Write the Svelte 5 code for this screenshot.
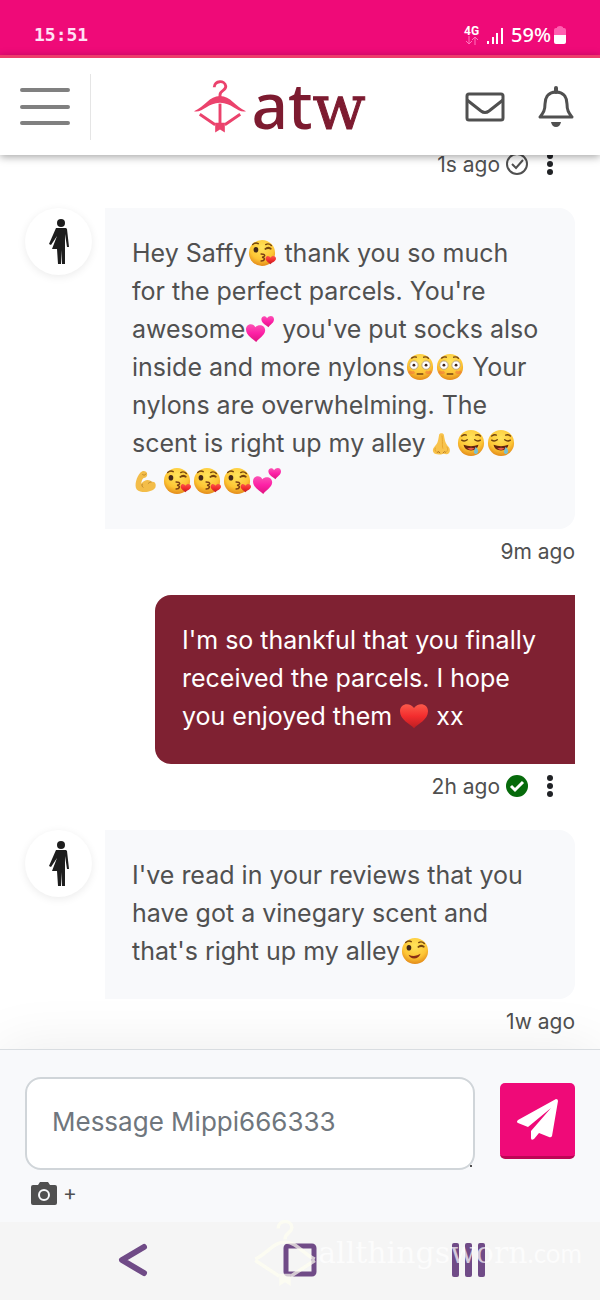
<script>
  const emojiNames = {
    '😘': 'kiss',
    '💕': 'hearts',
    '😳': 'flushed',
    '👃': 'nose',
    '🤤': 'drool',
    '💪': 'muscle',
    '❤': 'heart',
    '😉': 'wink'
  };

  const messages = [
    { id: 1, own: true, text: '', time: '1s ago', status: 'sent' },
    {
      id: 2,
      own: false,
      text: "Hey Saffy😘 thank you so much for the perfect parcels. You're awesome💕 you've put socks also inside and more nylons😳😳 Your nylons are overwhelming. The scent is right up my alley👃🤤🤤💪😘😘😘💕",
      time: '9m ago'
    },
    {
      id: 3,
      own: true,
      text: "I'm so thankful that you finally received the parcels. I hope you enjoyed them ❤ xx",
      time: '2h ago',
      status: 'read'
    },
    {
      id: 4,
      own: false,
      text: "I've read in your reviews that you have got a vinegary scent and that's right up my alley😉",
      time: '1w ago'
    }
  ];

  let draft = $state('');

  function split(text) {
    return text.split(/(😘|💕|😳|👃|🤤|💪|❤|😉)/u).filter(Boolean);
  }
</script>

{#snippet emoji(char)}
  {@const name = emojiNames[char]}
  <svg class="emoji" viewBox="0 0 30 30" role="img" aria-label={name}>
    {#if name === 'heart'}
      <path d="M15 28C11 24 0 19 0 10 0 1 11 0 15 6.500 19 0 30 1 30 10 30 19 19 24 15 28z" fill="url(#red)" />
    {:else if name === 'hearts'}
      <path d="M11 29C8 26 0 22 0 15.500 0 9 8 8 10 13c4-4 11-2 10.500 4C20 22 14 25 11 29z" fill="url(#pink)" />
      <path d="M24 13c-2-2-7-4-7.500-8C16 1 21 0 22.500 3.500 25-.5 30 .5 30 4.500c0 4-4 5.500-6 8.500z" fill="url(#pink)" />
    {:else if name === 'nose'}
      <path d="M13 6c1-2 4-2 5 0 1 5 1 8 4 12 4 3 3 9-1 9-2 0-3-1-5 0-2 1-3 0-5 0-5 0-6-5-3-8 4-4 4-7 5-13z" fill="#f8c34c" />
      <path d="M16 7c1 7 0 10 1 14M9 20c-1 3 0 5 3 5M21 19c2 2 1 5-1 6" fill="none" stroke="#e5a52c" stroke-width="1" />
      <path d="M11 25q2-2 3 1M17 26q2-3 3-1" fill="none" stroke="#a96f20" stroke-width="1" />
    {:else if name === 'muscle'}
      <path d="M8 6c2-3 7-2 7 1 1 3-2 5-4 5-2 2-2 5-2 6 3-5 9-5 11-2 4-1 5 3 4 6-3 5-15 7-20 2C1 20 4 10 8 6z" fill="#f3bd49" />
      <path d="M10 8c2 1 3 1 4-1M10 18c-1 2 0 3 1 4M20 16c-2 0-3 1-4 2" fill="none" stroke="#ba842b" stroke-width="1" />
    {:else}
      <circle cx="15" cy="15" r="14" fill="url(#face)" />
      {#if name === 'flushed'}
        <g fill="#fff" stroke="#b7a282" stroke-width="1">
          <circle cx="8.500" cy="13" r="4.500" />
          <circle cx="21.500" cy="13" r="4.500" />
        </g>
        <circle cx="8.500" cy="13" r="1.500" fill="#43271a" />
        <circle cx="21.500" cy="13" r="1.500" fill="#43271a" />
        <path d="M6 5.500q3-2 5-1M19 4.500q3-1 5 1M12 22.500h6" fill="none" stroke="#744312" stroke-width="1.500" stroke-linecap="round" />
        <path d="M3 20q4 2 6 0M21 20q3 2 6 0" stroke="#f26b3d" stroke-width="3" opacity=".5" fill="none" />
      {:else if name === 'drool'}
        <path d="M5 12q3 2 6-.5M19 11.500q3 2.500 6 .5M5 7.500q3-2 5-1M20 6.500q3-1 5 1" fill="none" stroke="#70420e" stroke-width="1.500" stroke-linecap="round" />
        <path d="M7 17q8 3 16 0-1 6-8 6-7 0-8-6z" fill="#64220e" />
        <path d="M11 21q4-2 8 0-4 3-8 0z" fill="#e95c4a" />
        <path d="M20 19c3 3 3 5 2 7-2 2-4 0-4-2z" fill="#78bfd2" />
      {:else}
        <ellipse cx="8.500" cy="11.500" rx="2.500" ry="3" fill="#422719" />
        <path d="M18 11q4-4 7 0-3-2-7 0zM5 6q3-3 6-1M19 6q3-2 6 1" fill="none" stroke="#75450f" stroke-width="1.500" stroke-linecap="round" />
        {#if name === 'kiss'}
          <path d="M14 16c5 0 5 3 1 3.500 4 .5 3 4-1 4" fill="none" stroke="#793c15" stroke-width="1.500" stroke-linecap="round" />
          <path d="M24 27c-2-2-6-4-5-7 1-3 4-2 5 0 2-3 6-2 6 1s-4 4-6 6z" fill="url(#red)" />
        {:else}
          <path d="M8 19q7 3 13-1-2 5-7 5-4 0-6-4z" fill="#8b2e14" />
        {/if}
      {/if}
    {/if}
  </svg>
{/snippet}

{#snippet hanger()}
  <g fill="none" stroke="currentColor">
    <path d="M21 7c0-7 11-8 12-1 0 5-6 4-6 9v3" stroke-width="3" />
    <path d="M27 24v22" stroke-width="3" />
    <path d="M6 35l16 11M48 35L32 46" stroke-width="3" />
  </g>
  <path d="M0 32C11 27 16 16 27 16s16 11 27 16c-9 2-14-9-27-9S9 34 0 32z" fill="currentColor" />
  <path d="M22 44h10v10l-5-3-5 3z" fill="currentColor" />
{/snippet}

<svg class="defs" width="0" height="0" aria-hidden="true">
  <defs>
    <radialGradient id="face" cx=".5" cy=".3" r=".7">
      <stop offset="0" stop-color="#ffe45c" />
      <stop offset=".65" stop-color="#fdc534" />
      <stop offset="1" stop-color="#e38a19" />
    </radialGradient>
    <linearGradient id="red" x2="0" y2="1">
      <stop offset="0" stop-color="#fb5a4b" />
      <stop offset=".5" stop-color="#f32d2e" />
      <stop offset="1" stop-color="#be1e22" />
    </linearGradient>
    <linearGradient id="pink" x2="0" y2="1">
      <stop offset="0" stop-color="#fb55b5" />
      <stop offset=".5" stop-color="#fd21a6" />
      <stop offset="1" stop-color="#df1480" />
    </linearGradient>
  </defs>
</svg>

<div class="screen">
  <div class="status-bar">
    <time>15:51</time>
    <div class="status-icons">
      <div class="network">
        <span>4G</span>
        <svg width="14" height="9" viewBox="0 0 14 9" aria-hidden="true">
          <path d="M4 0v8M1 5l3 3 3-3M10 9V1M7 4l3-3 3 3" fill="none" stroke="#ff75bc" stroke-width="1" />
        </svg>
      </div>
      <svg width="16" height="17" viewBox="0 0 16 17" aria-hidden="true">
        <path d="M1 17v-3M6 17V10M10 17V6M15 17V1" stroke="#fff" stroke-width="2" />
      </svg>
      <div class="charge">
        <span>59%</span>
        <svg width="12" height="18" viewBox="0 0 12 18" aria-hidden="true">
          <path d="M3 1q3-2 6 0v1h1q2 0 2 2v5H0V4q0-2 2-2h1z" fill="#ff5fb0" />
          <path d="M0 9h12v7q0 2-2 2H2q-2 0-2-2z" fill="#fff" />
        </svg>
      </div>
    </div>
  </div>

  <header>
    <button class="menu" aria-label="Menu">
      <svg width="50" height="38" viewBox="0 0 50 38" aria-hidden="true">
        <path d="M2 2h46M2 19h46M2 35h46" stroke="#808080" stroke-width="4" stroke-linecap="round" />
      </svg>
    </button>
    <a class="logo" href="/">
      <svg width="52" height="53" viewBox="0 0 54 54" aria-hidden="true">{@render hanger()}</svg>
      <span>at<b>w</b></span>
    </a>
    <nav>
      <a href="/messages" aria-label="Messages">
        <svg width="40" height="30" viewBox="0 0 40 30" fill="none" stroke="#505050" stroke-width="3" aria-hidden="true">
          <rect x="2" y="2" width="36" height="26" rx="2" />
          <path d="M2 8l14 11q4 3 8 0L38 8" />
        </svg>
      </a>
      <a href="/notifications" aria-label="Notifications">
        <svg width="36" height="42" viewBox="0 0 36 42" fill="none" stroke="#505050" stroke-width="3" stroke-linejoin="round" aria-hidden="true">
          <path d="M18 2v4" stroke-width="4" stroke-linecap="round" />
          <path d="M18 6C9 6 7 13 7 18c0 7-2 9-5 13h32c-3-4-5-6-5-13 0-5-2-12-11-12z" />
          <path d="M13 36h10q-1 5-5 5t-5-5z" fill="#505050" stroke="none" />
        </svg>
      </a>
    </nav>
  </header>

  <main>
    {#each messages as message (message.id)}
      <article class:own={message.own}>
        {#if message.text}
          <div class="row">
            {#if !message.own}
              <a class="avatar" href="/profile" aria-label="Mippi666333">
                <svg width="20" height="46" viewBox="0 0 20 46" fill="#1d1d1d" aria-hidden="true">
                  <circle cx="12" cy="4" r="4" />
                  <path d="M7 9h10l1 1 2 18h-2l-2-13v30h-3l-1-14v14H9l-1-15H3l5-13-6 9-2-1z" />
                </svg>
              </a>
            {/if}
            <p class="bubble">
              {#each split(message.text) as part}{#if emojiNames[part]}{@render emoji(part)}{:else}{part}{/if}{/each}
            </p>
          </div>
        {/if}
        <div class="meta">
          <span>{message.time}</span>
          {#if message.status}
            <svg width="22" height="22" viewBox="0 0 22 22" role="img" aria-label={message.status}>
              {#if message.status === 'read'}
                <circle cx="11" cy="11" r="11" fill="#066a0b" />
                <path d="M5 11l4 4 8-8" fill="none" stroke="#fff" stroke-width="3" />
              {:else}
                <circle cx="11" cy="11" r="10" fill="none" stroke="#505050" stroke-width="2" />
                <path d="M6 11l4 4 7-8" fill="none" stroke="#505050" stroke-width="2" />
              {/if}
            </svg>
            <button class="more" aria-label="Message options">
              <svg width="6" height="22" viewBox="0 0 6 22" fill="#202226" aria-hidden="true">
                <circle cx="3" cy="3" r="3" /><circle cx="3" cy="11" r="3" /><circle cx="3" cy="19" r="3" />
              </svg>
            </button>
          {/if}
        </div>
      </article>
    {/each}
  </main>

  <form onsubmit={(event) => event.preventDefault()}>
    <div class="compose">
      <div class="field">
        <textarea rows="1" aria-label="Message" placeholder="Message Mippi666333" bind:value={draft}></textarea>
        <i class="grip"></i>
      </div>
      <button class="send" aria-label="Send">
        <svg width="41" height="41" viewBox="0 0 41 41" fill="#fff" aria-hidden="true">
          <path d="M39 0q2 0 2 2l-6 35q-1 2-3 1l-10-4-5 6q-3 2-3-1v-7L34 9 11 28 1 24q-2-1 0-3z" />
        </svg>
      </button>
    </div>
    <button type="button" class="attach" aria-label="Add photo">
      <svg width="26" height="23" viewBox="0 0 26 23" aria-hidden="true">
        <path d="M2 3h5l2-3h8l2 3h5q2 0 2 2v16q0 2-2 2H2q-2 0-2-2V5q0-2 2-2z" fill="#505050" />
        <circle cx="13" cy="13" r="5" fill="none" stroke="#f8f9fb" stroke-width="2" />
      </svg>
      <span>+</span>
    </button>
  </form>

  <footer>
    <button aria-label="Back">
      <svg width="30" height="34" viewBox="0 0 30 34" aria-hidden="true">
        <path d="M26 4L4 17l22 13" fill="none" stroke="#704b87" stroke-width="6" stroke-linecap="round" stroke-linejoin="round" />
      </svg>
    </button>
    <button aria-label="Home">
      <svg width="34" height="34" viewBox="0 0 34 34" aria-hidden="true">
        <rect x="3" y="3" width="28" height="28" rx="2" fill="none" stroke="#704b87" stroke-width="5" />
      </svg>
    </button>
    <button aria-label="Recent apps">
      <svg width="34" height="34" viewBox="0 0 34 34" fill="#704b87" aria-hidden="true">
        <rect width="7" height="34" rx="2" /><rect x="13" width="7" height="34" rx="2" /><rect x="26" width="7" height="34" rx="2" />
      </svg>
    </button>
    <div class="watermark">
      <svg width="62" height="66" viewBox="0 0 54 54" preserveAspectRatio="none" fill="none" stroke="currentColor" stroke-width="3" aria-hidden="true">
        <path d="M21 7c0-7 11-8 12-1 0 5-6 4-6 10" />
        <path d="M1 32C11 28 17 18 27 18s16 10 26 14M1 33l21 13M53 33L32 46" />
        <path d="M22 44h10v10l-5-3-5 3z" fill="currentColor" stroke="none" />
      </svg>
      <span>allthingsworn<small>.com</small></span>
    </div>
  </footer>
</div>

<style>
  :global(body) {
    margin: 0;
    background: #fff;
  }

  .screen {
    display: flex;
    flex-direction: column;
    min-height: 100vh;
    color: #505050;
    font-family: Inter, "Liberation Sans", sans-serif;
    font-size: 25px;
  }

  .defs {
    position: absolute;
  }

  svg {
    flex: none;
    overflow: visible;
  }

  button {
    padding: 0;
    border: 0;
    background: none;
    color: inherit;
    font: inherit;
  }

  .status-bar {
    display: flex;
    align-items: flex-end;
    justify-content: space-between;
    height: 55px;
    padding: 0 34px 10px;
    box-sizing: border-box;
    background: #ef0a78;
    color: #fff;
  }

  time {
    color: #ffe0f4;
    font: bold 18px/20px "DejaVu Sans Mono", monospace;
  }

  .status-icons,
  .charge {
    display: flex;
    align-items: center;
  }

  .status-icons {
    gap: 8px;
    height: 20px;
  }

  .charge {
    gap: 3px;
    font: 500 20px/20px "Noto Sans", sans-serif;
  }

  .network {
    display: grid;
    justify-items: center;
    font: bold 12px/10px Roboto, sans-serif;
  }

  header {
    position: relative;
    z-index: 2;
    display: flex;
    align-items: center;
    justify-content: space-between;
    height: 97px;
    padding: 0 26px 0 20px;
    border-top: 3px solid #ee3c6c;
    background: #fff;
    box-shadow: 0 2px 8px rgba(0, 0, 0, 0.35);
  }

  .menu {
    display: flex;
    align-items: center;
    height: 66px;
    padding-right: 20px;
    border-right: 1px solid #e5e5e5;
  }

  .logo {
    display: flex;
    align-items: center;
    gap: 5px;
    padding-left: 4px;
    color: #eb426c;
    text-decoration: none;
  }

  .logo span {
    color: #7d1b30;
    font: 500 64px/80px "Noto Sans", sans-serif;
  }

  .logo b {
    font: 62px/80px "DejaVu Serif", serif;
    -webkit-text-stroke: 1px #7d1b30;
  }

  nav {
    display: flex;
    align-items: center;
    gap: 33px;
  }

  nav a {
    display: flex;
  }

  main {
    flex: 1;
    margin-top: -13px;
    padding: 0 25px;
  }

  article {
    margin-bottom: 22px;
  }

  article:last-child {
    margin-bottom: 6px;
  }

  .row {
    display: flex;
    gap: 13px;
  }

  .avatar {
    display: flex;
    flex: none;
    align-items: center;
    justify-content: center;
    width: 67px;
    height: 67px;
    border-radius: 50%;
    background: #fff;
    box-shadow: 0 2px 8px rgba(0, 0, 0, 0.08);
  }

  .bubble {
    flex: 1;
    margin: 0;
    padding: 26px 32px 29px 27px;
    border-radius: 0 16px 16px 0;
    background: #f8f9fb;
    line-height: 38px;
  }

  .own .row {
    margin-left: 130px;
  }

  .own .bubble {
    border-radius: 16px 0 0 16px;
    background: #7f2132;
    color: #fff;
  }

  .emoji {
    width: 28px;
    height: 28px;
    margin: 0 1px;
    vertical-align: -5px;
  }

  .meta {
    display: flex;
    align-items: center;
    justify-content: flex-end;
    gap: 6px;
    height: 44px;
    font-size: 21px;
  }

  .more {
    display: flex;
    margin: 0 22px 0 13px;
  }

  form {
    z-index: 1;
    padding: 27px 25px 14px;
    border-top: 1px solid #d9dde1;
    background: #f8f9fb;
    box-shadow: 0 0 60px rgba(0, 0, 0, 0.08);
  }

  .compose {
    display: flex;
    align-items: flex-start;
    gap: 25px;
  }

  .field {
    position: relative;
    display: flex;
    flex: 1;
  }

  textarea {
    flex: 1;
    min-width: 0;
    height: 93px;
    box-sizing: border-box;
    padding: 24px 25px;
    border: 2px solid #d0d5d9;
    border-radius: 16px;
    background: #fff;
    color: #505050;
    font: inherit;
    font-size: 26px;
    line-height: 38px;
    resize: none;
    overflow: hidden;
  }

  textarea::placeholder {
    color: #6f767d;
    opacity: 1;
  }

  .grip {
    position: absolute;
    right: 3px;
    bottom: 3px;
    width: 2px;
    height: 2px;
    background: #505050;
  }

  .send {
    display: grid;
    place-items: center;
    width: 75px;
    height: 76px;
    margin-top: 6px;
    border-bottom: 3px solid #bd0655;
    border-radius: 5px;
    background: #ef0a78;
  }

  .attach {
    display: flex;
    align-items: center;
    gap: 6px;
    margin: 8px 0 0 6px;
    line-height: 30px;
    font-size: 21px;
  }

  footer {
    position: relative;
    z-index: 1;
    display: flex;
    align-items: center;
    justify-content: space-around;
    height: 76px;
    padding: 0 46px 4px 50px;
    background: #f5f5f5;
  }

  footer button {
    display: flex;
  }

  .watermark {
    position: absolute;
    right: 18px;
    bottom: 16px;
    display: flex;
    align-items: center;
    gap: 2px;
    color: #fffff2;
    opacity: 0.7;
    pointer-events: none;
  }

  .watermark span {
    color: #fff;
    font: 30px/40px "DejaVu Serif", serif;
  }

  .watermark small {
    font: 26px/40px Lato, sans-serif;
  }
</style>
